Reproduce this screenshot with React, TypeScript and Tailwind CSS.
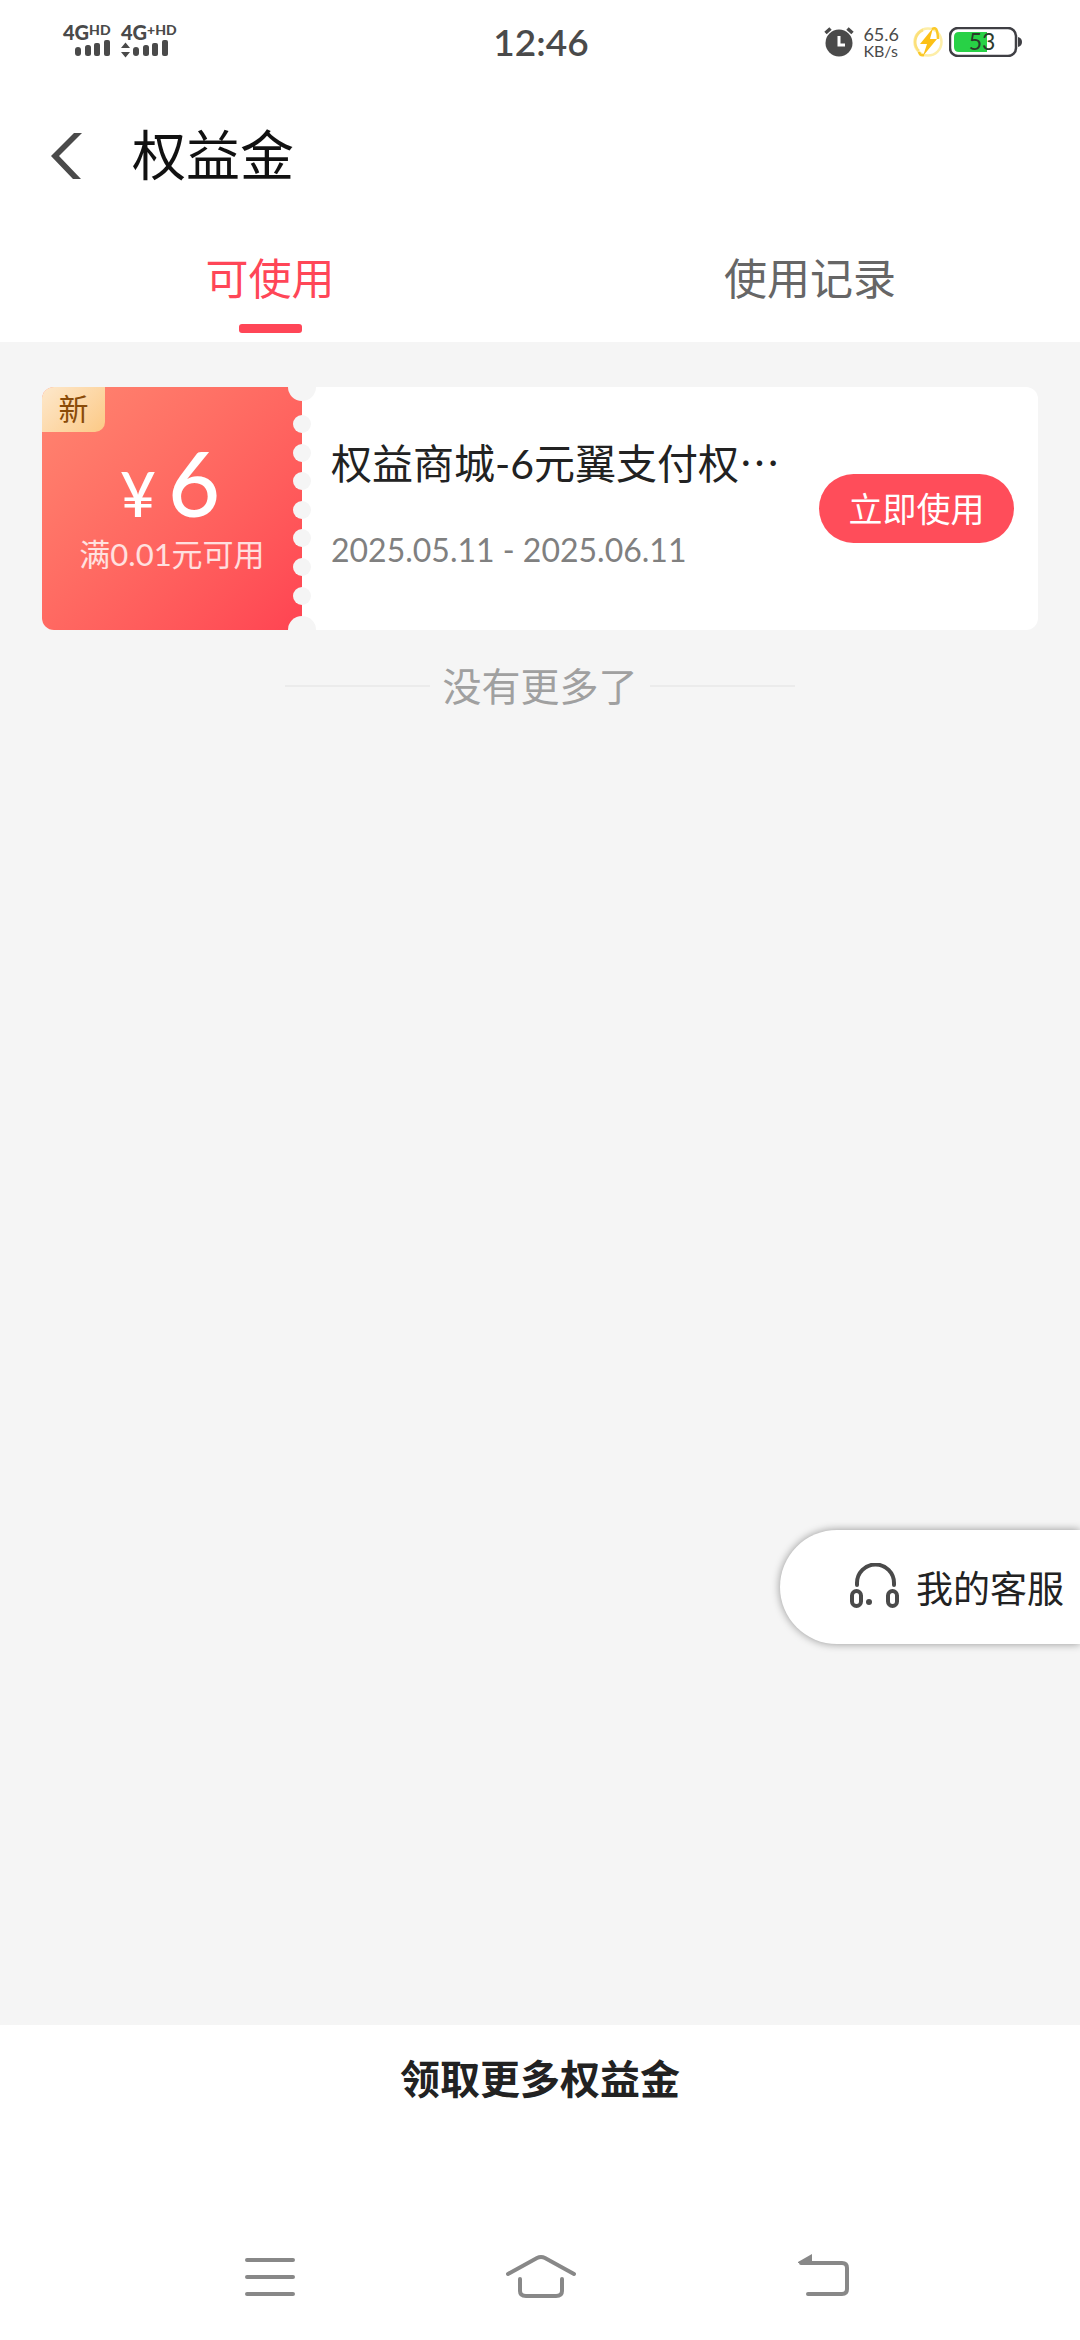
import React, { useState } from "react";

const tabs = ["可使用", "使用记录"];

const coupons = [
  {
    id: 1,
    tag: "新",
    amount: 6,
    condition: "满0.01元可用",
    title: "权益商城-6元翼支付权",
    period: "2025.05.11 - 2025.06.11",
  },
];

const notches = [37, 66, 94, 123, 151, 180, 209];

const SignalBars = ({ arrows }: { arrows?: boolean }) => (
  <svg width="50" height="18" viewBox="0 0 50 18" fill="#4a4a4a">
    {arrows && <path d="M4.500 2.500L9 8H0zM4.500 17.500L9 12H0z" />}
    <rect x="12" y="7" width="6" height="9" rx="3" />
    <rect x="22" y="5" width="6" height="11" rx="2.500" />
    <rect x="31" y="3" width="6" height="13" rx="2" />
    <rect x="41" y="0" width="6" height="16" rx="2" />
  </svg>
);

const StatusBar = () => (
  <div className="grid h-[84px] grid-cols-3 items-center pr-[58px] pl-[60px] text-[#4a4a4a]">
    <div className="flex gap-2 pb-[2px] font-black">
      <div className="flex flex-col">
        <div className="flex items-start pl-[3px] text-[20px] leading-[16px]">
          4G<span className="text-[14px] leading-[11px]">HD</span>
        </div>
        <div className="pl-[3px]">
          <SignalBars />
        </div>
      </div>
      <div className="flex flex-col">
        <div className="flex items-start text-[20px] leading-[16px]">
          4G<span className="text-[14px] leading-[11px]">+HD</span>
        </div>
        <SignalBars arrows />
      </div>
    </div>
    <div className="text-center text-[37px] leading-[40px] font-semibold">12:46</div>
    <div className="flex items-center justify-end">
      <svg width="30" height="30" viewBox="0 0 30 30" fill="none">
        <circle cx="15" cy="16" r="13.500" fill="#4a4a4a" />
        <path d="M1.500 6L6.500 1.500M28.500 6L23.500 1.500" stroke="#4a4a4a" strokeWidth="3.500" />
        <path d="M15 9v9h6" stroke="#fff" strokeWidth="3" />
      </svg>
      <div className="ml-[9px] flex flex-col">
        <span className="text-[18px] leading-[18px]">65.6</span>
        <span className="text-[16px] leading-[16px]">KB/s</span>
      </div>
      <svg className="ml-[14px]" width="30" height="30" viewBox="0 0 30 30" fill="none">
        <circle cx="15" cy="15" r="13.500" stroke="#fdeea8" strokeWidth="2.500" />
        <path d="M10 3A13 13 0 0 0 6 24" stroke="#fce07a" strokeWidth="2.500" />
        <path d="M19 2q4-2 5 2 1 4 1 8M11 28q-4 1-5-3" stroke="#fbc928" strokeWidth="2.500" />
        <path d="M20 1L7 17h7l-4 12L24 12h-7z" fill="#fcc016" />
      </svg>
      <svg className="ml-[6px]" width="73" height="30" viewBox="0 0 73 30" fill="none">
        <rect x="1" y="1" width="66" height="28" rx="8" stroke="#3f3f44" strokeWidth="2.500" />
        <path d="M69 10q4 1 4 5t-4 5z" fill="#3f3f44" />
        <path d="M10 5h28v20H10q-5 0-5-5V10q0-5 5-5z" fill="#28d146" />
        <text x="33" y="23" textAnchor="middle" fontSize="23" fill="#2c3a2c">
          53
        </text>
      </svg>
    </div>
  </div>
);

const CouponCard = ({ coupon }: { coupon: (typeof coupons)[number] }) => (
  <li className="relative flex h-[243px] overflow-hidden rounded-[12px] bg-white">
    <div className="flex w-[260px] shrink-0 flex-col items-center bg-linear-135 from-[#ff8570] to-[#ff4352] text-white">
      <span className="flex h-[45px] w-[63px] items-center justify-center self-start rounded-br-[10px] bg-linear-135 from-[#fde8cb] to-[#fcc985] pb-[3px] text-[30px] leading-none text-[#8a4b08]">
        {coupon.tag}
      </span>
      <div className="flex items-baseline gap-[12px] pr-1 font-medium">
        <span className="text-[62px] leading-none">¥</span>
        <span className="text-[90px] leading-[100px]">{coupon.amount}</span>
      </div>
      <div className="text-[31px] leading-[44px] text-white/80">{coupon.condition}</div>
    </div>
    {/* ticket perforation */}
    <svg
      className="absolute top-0 left-[246px]"
      width="28"
      height="243"
      viewBox="0 0 28 243"
      fill="#f5f5f5"
    >
      <circle cx="14" cy="0" r="14" />
      {notches.map((y) => (
        <circle key={y} cx="14" cy={y} r="9" />
      ))}
      <circle cx="14" cy="243" r="14" />
    </svg>
    <div className="flex flex-1 items-center justify-between pr-6 pl-[29px]">
      <div className="flex flex-col gap-[36px] pb-3">
        <h2 className="text-[41px] leading-[56px] whitespace-nowrap text-[#222]">
          {coupon.title}
          <span className="font-['Noto_Sans_CJK_SC',sans-serif]">…</span>
        </h2>
        <p className="text-[32px] leading-[44px] text-[#808080]">{coupon.period}</p>
      </div>
      <button className="h-[69px] w-[195px] rounded-full bg-[#ff4d5a] text-[34px] leading-none text-white">
        立即使用
      </button>
    </div>
  </li>
);

export default function App() {
  const [active, setActive] = useState(0);

  return (
    <div
      lang="zh-CN"
      className="flex min-h-screen flex-col bg-white font-['Lato','Noto_Sans_CJK_SC',sans-serif]"
    >
      <StatusBar />
      <header className="flex h-[144px] items-center pl-[50px]">
        <button aria-label="返回">
          <svg width="34" height="48" viewBox="0 0 34 48" fill="#4a4a4a">
            <path d="M24 1h8L9 24l22 23h-8L1 24z" />
          </svg>
        </button>
        <h1 className="ml-[48px] text-[54px] leading-[72px] text-[#111]">权益金</h1>
      </header>
      <nav className="flex h-[114px]">
        {tabs.map((tab, i) => (
          <button
            key={tab}
            onClick={() => setActive(i)}
            className={`flex flex-1 flex-col items-center justify-end gap-[15px] pb-[9px] text-[43px] ${
              i === active ? "text-[#ff4657]" : "text-[#666]"
            }`}
          >
            <span className="leading-[60px]">{tab}</span>
            <span
              className={`h-[9px] w-[63px] rounded-[3px] ${i === active ? "bg-[#ff4657]" : ""}`}
            />
          </button>
        ))}
      </nav>

      <main className="relative flex-1 bg-[#f5f5f5] px-[42px] pt-[45px]">
        <ul>
          {coupons.map((coupon) => (
            <CouponCard key={coupon.id} coupon={coupon} />
          ))}
        </ul>
        <div className="flex items-center justify-center gap-[12px] pt-7">
          <span className="h-[2px] w-[145px] bg-[#ebebeb]" />
          <span className="text-[39px] leading-[56px] text-[#a0a0a0]">没有更多了</span>
          <span className="h-[2px] w-[145px] bg-[#ebebeb]" />
        </div>
        <button className="absolute right-0 bottom-[381px] flex h-[114px] items-center rounded-l-full bg-white pr-[16px] pl-[70px] text-[37px] text-[#222] shadow-[0_0_8px_rgba(0,0,0,0.4)]">
          <svg width="50" height="48" viewBox="0 0 50 48" fill="none" stroke="#4a4a4a">
            <path d="M7 22v-2a18 18 0 0 1 37 0v2" strokeWidth="4" strokeLinecap="round" />
            <rect x="2" y="28" width="9" height="15" rx="4.500" strokeWidth="4" />
            <rect x="38" y="28" width="9" height="15" rx="4.500" strokeWidth="4" />
            <circle cx="19" cy="39" r="3" fill="#4a4a4a" stroke="none" />
          </svg>
          <span className="ml-4 pt-1 leading-[50px]">我的客服</span>
        </button>
      </main>

      <footer>
        <button className="block h-[108px] w-full text-[40px] leading-[56px] font-bold text-[#222]">
          领取更多权益金
        </button>
        <div className="flex h-[207px] items-end justify-center px-[12.5%] pb-[36px]">
          <button aria-label="菜单" className="flex flex-1 justify-center">
            <svg width="80" height="54" viewBox="0 0 80 54" stroke="#888" strokeWidth="4" strokeLinecap="round">
              <path d="M17 10h46M17 27h46M17 44h46" />
            </svg>
          </button>
          <button aria-label="主页" className="flex flex-1 justify-center">
            <svg width="80" height="54" viewBox="0 0 80 54" fill="none" stroke="#888" strokeWidth="4" strokeLinecap="round">
              <path d="M8 24L37 8q4-2 8 0l29 16M20 29v12q0 5 6 5h30q6 0 6-5V29" />
            </svg>
          </button>
          <button aria-label="后退" className="flex flex-1 justify-center">
            <svg width="80" height="54" viewBox="0 0 80 54" fill="none" stroke="#888" strokeWidth="4" strokeLinecap="round">
              <path d="M31 13h41q5 0 5 5v21q0 5-5 5H38" />
              <path d="M28 13v-1l14-8v9z" fill="#888" stroke="none" />
            </svg>
          </button>
        </div>
      </footer>
    </div>
  );
}
